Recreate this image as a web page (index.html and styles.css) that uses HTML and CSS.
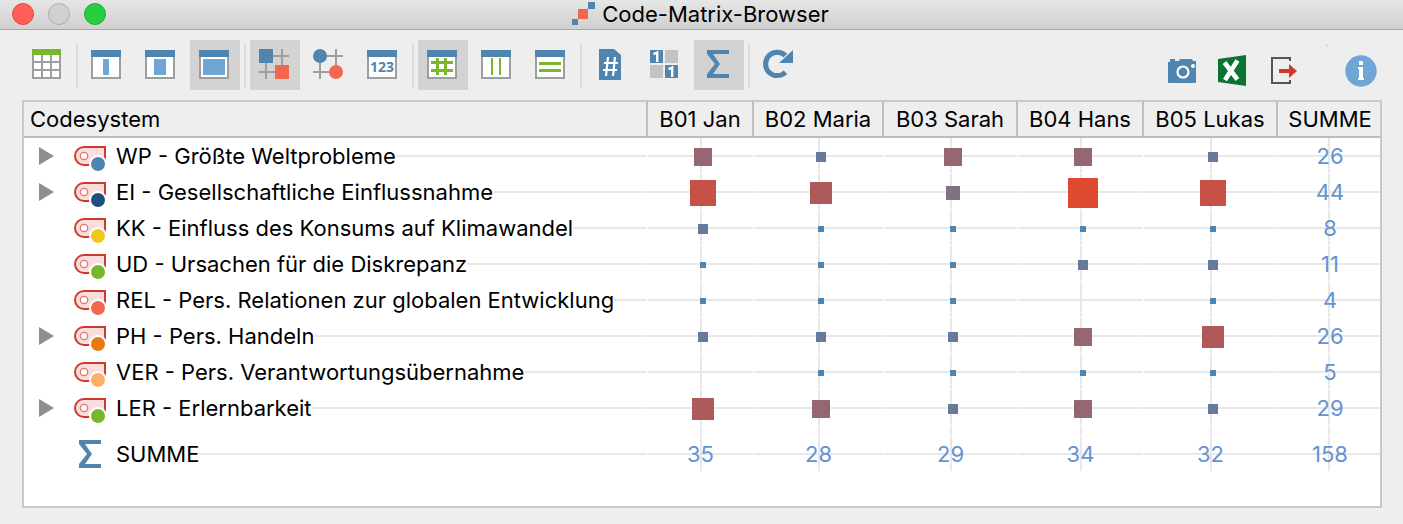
FILE: index.html
```html
<!DOCTYPE html>
<html lang="de">
<head>
    <meta charset="UTF-8">
    <title>Code-Matrix-Browser</title>
    <link rel="stylesheet" href="styles.css">
</head>
<body>
    <!-- shared icons -->
    <svg class="icon-defs" aria-hidden="true">
        <symbol id="window" viewBox="0 0 32 32">
            <path fill="#9e9e9e" d="M0 8h30v22H0z"/>
            <path fill="#fff" d="M2 8h26v20H2z"/>
            <path fill="#5085b0" d="M0 1h30v7H0z"/>
        </symbol>
        <symbol id="grid-lines" viewBox="0 0 32 32">
            <path fill="#9e9e9e" d="M22 0h2v16h-2zM14 6h16v2H14zM6 14h2v16H6zM0 22h16v2H0z"/>
        </symbol>
        <symbol id="sigma" viewBox="0 0 32 32">
            <path fill="#5085b0" d="M4 1h22v4H10l7 10-7 10h16v4H4v-4l8-10L4 5z"/>
        </symbol>
        <symbol id="code" viewBox="0 0 32 36">
            <path fill="#f9dedd" stroke="#cf3a2c" stroke-width="2" d="M31 24V9H10a9 9 0 0 0 0 18h15"/>
            <circle cx="10" cy="18" r="3.7" fill="#fff" stroke="#dd7870" stroke-width="1.3"/>
            <circle cx="24" cy="26" r="9" fill="#fff"/>
            <circle cx="24" cy="26" r="7" fill="currentColor"/>
        </symbol>
        <symbol id="arrow" viewBox="0 0 15 18">
            <path fill="#8e8e8e" d="M0 0l15 9-15 9z"/>
        </symbol>
    </svg>

    <header class="titlebar">
        <div class="lights">
            <button type="button" class="light close" aria-label="Schließen"></button>
            <button type="button" class="light minimize" aria-label="Minimieren"></button>
            <button type="button" class="light maximize" aria-label="Maximieren"></button>
        </div>
        <h1>
            <svg width="24" height="24" viewBox="0 0 24 24"><path fill="#5085b0" d="M16 0h7v7h-7zM0 17h6v6H0z"/><path fill="#f2674f" d="M6 7h10v10H6z"/></svg>
            <span>Code-Matrix-Browser</span>
        </h1>
    </header>

    <nav class="toolbar">
        <button type="button" class="tool" aria-label="Tabelle">
            <svg viewBox="0 0 32 32"><path fill="#9e9e9e" d="M1 6h29v24H1z"/><path fill="#78b72a" d="M1 0h29v6H1z"/><path fill="#fff" d="M3 6h7v6H3zM12 6h7v6h-7zM21 6h7v6h-7zM3 14h7v6H3zM12 14h7v6h-7zM21 14h7v6h-7zM3 22h7v6H3zM12 22h7v6h-7zM21 22h7v6h-7z"/></svg>
        </button>
        <span class="separator"></span>
        <button type="button" class="tool" aria-label="Schmale Spalten">
            <svg viewBox="0 0 32 32"><use href="#window"/><path fill="#70a6d6" d="M12 10h6v16h-6z"/></svg>
        </button>
        <button type="button" class="tool" aria-label="Mittlere Spalten">
            <svg viewBox="0 0 32 32"><use href="#window"/><path fill="#70a6d6" d="M9 10h12v16H9z"/></svg>
        </button>
        <button type="button" class="tool active" aria-label="Breite Spalten">
            <svg viewBox="0 0 32 32"><use href="#window"/><path fill="#70a6d6" d="M4 10h22v16H4z"/></svg>
        </button>
        <span class="separator"></span>
        <button type="button" class="tool active" aria-label="Quadrate">
            <svg viewBox="0 0 32 32"><use href="#grid-lines"/><path fill="#5085b0" d="M0 0h14v14H0z"/><path fill="#f2674f" d="M16 16h14v14H16z"/></svg>
        </button>
        <button type="button" class="tool" aria-label="Kreise">
            <svg viewBox="0 0 32 32"><use href="#grid-lines"/><circle cx="7" cy="7" r="7" fill="#5085b0"/><circle cx="23" cy="23" r="7" fill="#f2674f"/></svg>
        </button>
        <button type="button" class="tool" aria-label="Werte">
            <svg viewBox="0 0 32 32"><use href="#window"/><text class="icon-text" x="15" y="23" fill="#5085b0">123</text></svg>
        </button>
        <span class="separator"></span>
        <button type="button" class="tool active" aria-label="Alle Linien">
            <svg viewBox="0 0 32 32"><use href="#window"/><path fill="#78b72a" d="M4 12h22v3H4zM4 20h22v3H4zM9 9h3v17H9zM17 9h3v17h-3z"/></svg>
        </button>
        <button type="button" class="tool" aria-label="Vertikale Linien">
            <svg viewBox="0 0 32 32"><use href="#window"/><path fill="#78b72a" d="M10 9h2v17h-2zM18 9h2v17h-2z"/></svg>
        </button>
        <button type="button" class="tool" aria-label="Horizontale Linien">
            <svg viewBox="0 0 32 32"><use href="#window"/><path fill="#78b72a" d="M4 13h22v3H4zM4 20h22v3H4z"/></svg>
        </button>
        <span class="separator"></span>
        <button type="button" class="tool" aria-label="Anzahl">
            <svg viewBox="0 0 32 32"><path fill="#5085b0" d="M4 0h15l7 6v25H4z"/><path fill="none" stroke="#fff" stroke-width="2.2" d="M13 8l-2 19M20 8l-2 19M9 14h14M8 21h14"/></svg>
        </button>
        <button type="button" class="tool" aria-label="Binär">
            <svg viewBox="0 0 32 32"><path fill="#c3c3c3" d="M16 1h13v13H16zM1 16h13v13H1z"/><path fill="#5085b0" d="M1 1h13v13H1zM16 16h13v13H16z"/><path fill="none" stroke="#fff" stroke-width="2.4" d="M4.5 5.2L8.2 3.6V13M19.5 20.2L23.2 18.6V28"/></svg>
        </button>
        <button type="button" class="tool active" aria-label="Summe">
            <svg viewBox="0 0 32 32"><use href="#sigma"/></svg>
        </button>
        <span class="separator"></span>
        <button type="button" class="tool" aria-label="Aktualisieren">
            <svg viewBox="0 0 32 32"><path fill="none" stroke="#5085b0" stroke-width="5" d="M22.5 23.2A11.7 11.7 0 1 1 22.5 6.6"/><path fill="#5085b0" d="M30 1v13H16z"/></svg>
        </button>

        <div class="toolbar-right">
            <button type="button" class="tool" aria-label="Bild exportieren">
                <svg viewBox="0 0 32 32"><path fill="#5085b0" d="M4 4h5v2h4l1-2h12l1 2h3v21a1 1 0 0 1-1 1H3a1 1 0 0 1-1-1V7h2z"/><circle cx="17" cy="17" r="5.5" fill="none" stroke="#fff" stroke-width="2.2"/><circle cx="27" cy="11" r="2" fill="#fff"/></svg>
            </button>
            <button type="button" class="tool" aria-label="Excel-Export">
                <svg viewBox="0 0 32 32"><path fill="#0b7433" d="M2 4l28-4v31L2 27z"/><path fill="none" stroke="#fff" stroke-width="4.6" d="M8.5 7.5l13 17M21.5 5.5L9 25"/></svg>
            </button>
            <button type="button" class="tool" aria-label="Exportieren">
                <svg viewBox="0 0 32 32"><path fill="none" stroke="#555" stroke-width="2" d="M24 6V3H6v25h18v-3"/><path fill="#d23828" d="M13 14h10V9l8 7-8 7v-5H13z"/></svg>
            </button>
            <span class="tick"></span>
            <button type="button" class="tool" aria-label="Info">
                <svg viewBox="0 0 32 32"><circle cx="16" cy="16" r="15.7" fill="#70a6d6"/><path fill="#fff" d="M14 6h4v4h-4zM13 12h5v11h1v2h-6v-2h1v-9h-1z"/></svg>
            </button>
        </div>
    </nav>

    <main class="matrix-frame">
        <table class="matrix">
            <colgroup>
                <col>
                <col class="col-jan">
                <col class="col-maria">
                <col class="col-sarah">
                <col class="col-hans">
                <col class="col-lukas">
                <col class="col-sum">
            </colgroup>
            <thead>
                <tr>
                    <th scope="col">Codesystem</th>
                    <th scope="col">B01 Jan</th>
                    <th scope="col">B02 Maria</th>
                    <th scope="col">B03 Sarah</th>
                    <th scope="col">B04 Hans</th>
                    <th scope="col">B05 Lukas</th>
                    <th scope="col">SUMME</th>
                </tr>
            </thead>
            <tbody>
                <tr>
                    <th scope="row"><div class="code-cell"><button type="button" class="expander" aria-label="Aufklappen"><svg><use href="#arrow"/></svg></button><svg class="code-icon blue"><use href="#code"/></svg><span>WP - Größte Weltprobleme</span></div></th>
                    <td><i class="dot d4"></i></td>
                    <td><i class="dot d2"></i></td>
                    <td><i class="dot d4"></i></td>
                    <td><i class="dot d4"></i></td>
                    <td><i class="dot d2"></i></td>
                    <td>26</td>
                </tr>
                <tr>
                    <th scope="row"><div class="code-cell"><button type="button" class="expander" aria-label="Aufklappen"><svg><use href="#arrow"/></svg></button><svg class="code-icon navy"><use href="#code"/></svg><span>EI - Gesellschaftliche Einflussnahme</span></div></th>
                    <td><i class="dot d6"></i></td>
                    <td><i class="dot d5"></i></td>
                    <td><i class="dot d3"></i></td>
                    <td><i class="dot d7"></i></td>
                    <td><i class="dot d6"></i></td>
                    <td>44</td>
                </tr>
                <tr>
                    <th scope="row"><div class="code-cell leaf"><svg class="code-icon yellow"><use href="#code"/></svg><span>KK - Einfluss des Konsums auf Klimawandel</span></div></th>
                    <td><i class="dot d2"></i></td>
                    <td><i class="dot d1"></i></td>
                    <td><i class="dot d1"></i></td>
                    <td><i class="dot d1"></i></td>
                    <td><i class="dot d1"></i></td>
                    <td>8</td>
                </tr>
                <tr>
                    <th scope="row"><div class="code-cell leaf"><svg class="code-icon green"><use href="#code"/></svg><span>UD - Ursachen für die Diskrepanz</span></div></th>
                    <td><i class="dot d1"></i></td>
                    <td><i class="dot d1"></i></td>
                    <td><i class="dot d1"></i></td>
                    <td><i class="dot d2"></i></td>
                    <td><i class="dot d2"></i></td>
                    <td>11</td>
                </tr>
                <tr>
                    <th scope="row"><div class="code-cell leaf"><svg class="code-icon coral"><use href="#code"/></svg><span>REL - Pers. Relationen zur globalen Entwicklung</span></div></th>
                    <td><i class="dot d1"></i></td>
                    <td><i class="dot d1"></i></td>
                    <td><i class="dot d1"></i></td>
                    <td></td>
                    <td><i class="dot d1"></i></td>
                    <td>4</td>
                </tr>
                <tr>
                    <th scope="row"><div class="code-cell"><button type="button" class="expander" aria-label="Aufklappen"><svg><use href="#arrow"/></svg></button><svg class="code-icon orange"><use href="#code"/></svg><span>PH - Pers. Handeln</span></div></th>
                    <td><i class="dot d2"></i></td>
                    <td><i class="dot d2"></i></td>
                    <td><i class="dot d2"></i></td>
                    <td><i class="dot d4"></i></td>
                    <td><i class="dot d5"></i></td>
                    <td>26</td>
                </tr>
                <tr>
                    <th scope="row"><div class="code-cell leaf"><svg class="code-icon peach"><use href="#code"/></svg><span>VER - Pers. Verantwortungsübernahme</span></div></th>
                    <td></td>
                    <td><i class="dot d1"></i></td>
                    <td><i class="dot d1"></i></td>
                    <td><i class="dot d1"></i></td>
                    <td><i class="dot d1"></i></td>
                    <td>5</td>
                </tr>
                <tr>
                    <th scope="row"><div class="code-cell"><button type="button" class="expander" aria-label="Aufklappen"><svg><use href="#arrow"/></svg></button><svg class="code-icon green"><use href="#code"/></svg><span>LER - Erlernbarkeit</span></div></th>
                    <td><i class="dot d5"></i></td>
                    <td><i class="dot d4"></i></td>
                    <td><i class="dot d2"></i></td>
                    <td><i class="dot d4"></i></td>
                    <td><i class="dot d2"></i></td>
                    <td>29</td>
                </tr>
            </tbody>
            <tfoot>
                <tr class="spacer" aria-hidden="true">
                    <td></td><td></td><td></td><td></td><td></td><td></td><td></td>
                </tr>
                <tr>
                    <th scope="row"><div class="code-cell leaf"><svg class="sum-icon" viewBox="-1 -1 32 32"><use href="#sigma" width="32" height="32"/></svg><span>SUMME</span></div></th>
                    <td>35</td>
                    <td>28</td>
                    <td>29</td>
                    <td>34</td>
                    <td>32</td>
                    <td>158</td>
                </tr>
            </tfoot>
        </table>
    </main>
</body>
</html>
```
FILE: styles.css
```css
* {
    margin: 0;
    padding: 0;
    box-sizing: border-box;
}

body {
    min-height: 100vh;
    display: flex;
    flex-direction: column;
    background: #eee;
    color: #000;
    font-family: Inter, "Liberation Sans", sans-serif;
    font-size: 22px;
    line-height: 28px;
}

button {
    border: none;
    background: none;
    cursor: pointer;
}

svg {
    display: block;
    flex: none;
}

.icon-defs {
    width: 0;
    height: 0;
    position: absolute;
}

/* title bar */
.titlebar {
    display: grid;
    grid-template-columns: 1fr auto 1fr;
    align-items: center;
    height: 30px;
    padding: 0 14px 2px 12px;
    background: linear-gradient(#e6e6e6, #d0d0d0);
    border-bottom: 1px solid #a9a9a9;
}

.titlebar h1 {
    display: flex;
    align-items: center;
    gap: 6px;
    font-size: 22px;
    line-height: 26px;
    font-weight: normal;
}

.lights {
    display: flex;
    gap: 14px;
}

.light {
    width: 22px;
    height: 22px;
    border-radius: 50%;
    border: 1px solid;
}

.close {
    background: #ff5f57;
    border-color: #e2463f;
}

.minimize {
    background: #d0d0d0;
    border-color: #b0b0b0;
}

.maximize {
    background: #28cd41;
    border-color: #1dad2b;
}

/* toolbar */
.toolbar {
    display: flex;
    align-items: flex-start;
    gap: 4px;
    height: 70px;
    padding: 10px 17px 0 22px;
}

.tool {
    display: flex;
    align-items: center;
    justify-content: center;
    flex: none;
    width: 50px;
    height: 50px;
}

.tool svg {
    width: 32px;
    height: 32px;
}

.tool.active {
    background: #d3d3d3;
}

.icon-text {
    font: bold 14px "Noto Sans", sans-serif;
    text-anchor: middle;
}

.separator {
    width: 2px;
    height: 44px;
    margin-top: 4px;
    background: #dcdcdc;
}

.toolbar-right {
    display: flex;
    margin: 4px 0 0 auto;
}

.toolbar-right .tool {
    height: 54px;
}

.tick {
    width: 2px;
    height: 3px;
    margin: 0 8px 0 19px;
    background: #dcdcdc;
}

/* matrix */
.matrix-frame {
    flex: 1;
    margin: 0 21px 16px 22px;
    background: #fff;
    border: 2px solid #c8c8c8;
}

.matrix {
    width: 100%;
    table-layout: fixed;
    border-collapse: separate;
    border-spacing: 0;
}

.col-jan { width: 106px; }
.col-maria { width: 130px; }
.col-sarah { width: 134px; }
.col-hans { width: 126px; }
.col-lukas { width: 134px; }
.col-sum { width: 102px; }

.matrix th {
    font-weight: normal;
    white-space: nowrap;
}

.matrix thead th {
    height: 36px;
    background: #eee;
    border-right: 2px solid #bdbdbd;
    border-bottom: 2px solid #bdbdbd;
}

.matrix thead th:first-child {
    padding-left: 6px;
    text-align: left;
}

.matrix thead th:last-child {
    padding-left: 2px;
    border-right: none;
}

.matrix tbody th,
.matrix tfoot th,
.matrix td {
    height: 36px;
    border-right: 1px solid #fff;
    border-bottom: 1px solid #fff;
    background: linear-gradient(#e8e8e8, #e8e8e8) 0 17px / 100% 2px no-repeat;
}

.matrix td {
    color: #6593d0;
    text-align: center;
    background:
        linear-gradient(#e8e8e8, #e8e8e8) 50% 0 / 2px 100% no-repeat,
        linear-gradient(#e8e8e8, #e8e8e8) 0 17px / 100% 2px no-repeat;
}

.matrix td:last-child {
    padding-left: 2px;
    border-right: none;
}

.matrix .spacer td {
    height: 10px;
    background: linear-gradient(#e8e8e8, #e8e8e8) 50% 0 / 2px 100% no-repeat;
}

.matrix .spacer td:first-child {
    background: none;
}

/* white strip keeps the row line from running behind arrow and icon */
.code-cell {
    display: flex;
    align-items: center;
    height: 35px;
    padding-left: 15px;
    background: linear-gradient(#fff, #fff) 0 0 / 92px 100% no-repeat;
}

.code-cell.leaf {
    padding-left: 50px;
}

.code-cell span {
    background: #fff;
}

.expander {
    width: 15px;
    height: 18px;
    margin-right: 20px;
}

.expander svg {
    width: 15px;
    height: 18px;
}

.code-icon {
    width: 32px;
    height: 36px;
    margin-right: 10px;
}

.sum-icon {
    width: 32px;
    height: 32px;
    margin-right: 10px;
}

.blue { color: #5085b0; }
.navy { color: #1f4f7c; }
.yellow { color: #f0c817; }
.green { color: #78b72a; }
.coral { color: #f2674f; }
.orange { color: #ea7812; }
.peach { color: #fdae68; }

/* frequency squares */
.dot {
    display: block;
    margin: 0 auto;
}

.matrix td:has(.dot) {
    padding: 2px 0 0 4px;
}

.d1 { width: 6px; height: 6px; background: #4f86b0; }
.d2 { width: 10px; height: 10px; background: #687a9b; }
.d3 { width: 14px; height: 14px; background: #7f7186; }
.d4 { width: 18px; height: 18px; background: #966671; }
.d5 { width: 22px; height: 22px; background: #ae5a5b; }
.d6 { width: 26px; height: 26px; background: #c65146; }
.d7 { width: 30px; height: 30px; background: #df4831; }
```
